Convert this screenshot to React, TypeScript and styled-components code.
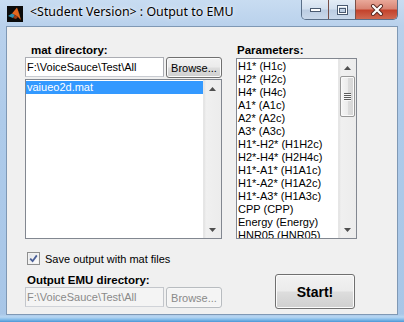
import React from 'react'
import styled, { createGlobalStyle } from 'styled-components'

const GlobalStyle = createGlobalStyle`
  html, body {
    margin: 0;
    padding: 0;
    background: #ffffff;
  }
  body {
    font-family: "Liberation Sans", Arial, sans-serif;
  }
`

const matFiles = ['vaiueo2d.mat']

const parameters = [
  'H1* (H1c)',
  'H2* (H2c)',
  'H4* (H4c)',
  'A1* (A1c)',
  'A2* (A2c)',
  'A3* (A3c)',
  'H1*-H2* (H1H2c)',
  'H2*-H4* (H2H4c)',
  'H1*-A1* (H1A1c)',
  'H1*-A2* (H1A2c)',
  'H1*-A3* (H1A3c)',
  'CPP (CPP)',
  'Energy (Energy)',
  'HNR05 (HNR05)',
]

const Window = styled.div`
  width: 404px;
  height: 322px;
  box-sizing: border-box;
  padding: 0 6px 7px 6px;
  display: flex;
  flex-direction: column;
  background:
    linear-gradient(0deg, #4b97d6 0px, #8fc2ec 3px, #b7d6f2 5px, rgba(180, 208, 236, 0) 8px),
    linear-gradient(180deg, #c8dcf1 0px, #b9d1ec 26px, #aecbea 120px, #a8c6e7 100%);
`

const TitleBar = styled.div`
  height: 26px;
  display: flex;
  align-items: flex-start;
`

const AppIcon = styled.svg`
  width: 16px;
  height: 16px;
  margin: 6px 0 0 1px;
  flex: none;
`

const Title = styled.div`
  margin: 4px 0 0 7px;
  font-family: "Noto Sans", "Open Sans", sans-serif;
  font-size: 12.4px;
  line-height: 16px;
  color: #000;
  text-shadow: 0 0 6px rgba(255, 255, 255, 0.9), 0 0 2px rgba(255, 255, 255, 0.9);
  white-space: nowrap;
`

const Caption = styled.div`
  margin-left: auto;
  display: flex;
  height: 19px;
  border: 1px solid #5a6f88;
  border-top: none;
  border-radius: 0 0 5px 5px;
  overflow: hidden;
`

const CaptionButton = styled.div<{ $close?: boolean }>`
  width: ${(p) => (p.$close ? '41px' : '26px')};
  display: flex;
  align-items: center;
  justify-content: center;
  & + & {
    border-left: 1px solid ${(p) => (p.$close ? '#7a5048' : '#8aa0ba')};
  }
  background: ${(p) =>
    p.$close
      ? 'linear-gradient(180deg, #e9a99a 0%, #d98574 45%, #c4432c 55%, #cf6a52 100%)'
      : 'linear-gradient(180deg, #e3ecf6 0%, #d3e0ef 45%, #bccde2 55%, #c9d8ea 100%)'};
`

const Client = styled.div`
  flex: 1;
  border: 1px solid #7f98b4;
  background: #f0f0f0;
  padding: 17px 0 0 18px;
  display: flex;
  gap: 14px;
`

const Column = styled.div<{ $width: number }>`
  width: ${(p) => p.$width}px;
  display: flex;
  flex-direction: column;
`

const Label = styled.div<{ $indent: number; $top?: number }>`
  height: 13px;
  line-height: 13px;
  margin-left: ${(p) => p.$indent}px;
  margin-top: ${(p) => p.$top || 0}px;
  font-size: 11.5px;
  font-weight: bold;
  color: #000;
  white-space: nowrap;
`

const FieldRow = styled.div`
  display: flex;
  gap: 2px;
  height: 21px;
`

const TextField = styled.div<{ $disabled?: boolean }>`
  width: 139px;
  height: 20px;
  box-sizing: border-box;
  border: 1px solid ${(p) => (p.$disabled ? '#c3c6cb' : '#abadb3')};
  border-bottom-color: ${(p) => (p.$disabled ? '#d0d3d8' : '#c9ccd2')};
  background: ${(p) => (p.$disabled ? '#f4f4f4' : '#ffffff')};
  color: ${(p) => (p.$disabled ? '#8a8a8a' : '#000')};
  font-size: 11px;
  line-height: 18px;
  padding-left: 1px;
  white-space: nowrap;
  overflow: hidden;
`

const Button = styled.div<{ $width: number; $height: number; $big?: boolean; $disabled?: boolean }>`
  width: ${(p) => p.$width}px;
  height: ${(p) => p.$height}px;
  box-sizing: border-box;
  border: 1px solid ${(p) => (p.$disabled ? '#b8bcc0' : '#707070')};
  border-radius: 3px;
  background: ${(p) =>
    p.$disabled
      ? '#f4f4f4'
      : 'linear-gradient(180deg, #f2f2f2 0%, #ebebeb 48%, #dddddd 52%, #cfcfcf 100%)'};
  box-shadow: inset 0 0 0 1px ${(p) => (p.$disabled ? '#f7f7f7' : '#fbfbfb')};
  color: ${(p) => (p.$disabled ? '#8a8a8a' : '#000')};
  font-size: ${(p) => (p.$big ? '14px' : '11px')};
  font-weight: ${(p) => (p.$big ? 'bold' : 'normal')};
  display: flex;
  align-items: center;
  justify-content: center;
  white-space: nowrap;
`

const ListBox = styled.div<{ $height: number; $top: number }>`
  height: ${(p) => p.$height}px;
  margin-top: ${(p) => p.$top}px;
  box-sizing: border-box;
  border: 1px solid #828790;
  background: #ffffff;
  display: flex;
  overflow: hidden;
`

const ListItems = styled.div`
  flex: 1;
  min-width: 0;
  display: flex;
  flex-direction: column;
  padding-top: 1px;
`

const ListItem = styled.div<{ $selected?: boolean }>`
  height: 13px;
  line-height: 13px;
  font-size: 11px;
  padding-left: 1px;
  white-space: nowrap;
  flex: none;
  background: ${(p) => (p.$selected ? '#3399ff' : 'transparent')};
  color: ${(p) => (p.$selected ? '#ffffff' : '#000')};
`

const ScrollTrack = styled.div`
  width: 17px;
  flex: none;
  display: flex;
  flex-direction: column;
  background: linear-gradient(90deg, #e2e2e2 0px, #f0f0f0 2px, #ececec 100%);
  border-left: 1px solid #e6e6e6;
`

const ScrollArrow = styled.div`
  height: 17px;
  display: flex;
  align-items: center;
  justify-content: center;
  flex: none;
`

const ScrollSpace = styled.div`
  flex: 1;
`

const Thumb = styled.div`
  height: 41px;
  margin: 0 1px 0 1px;
  box-sizing: border-box;
  border: 1px solid #979797;
  border-radius: 2px;
  background: linear-gradient(90deg, #f6f6f6 0%, #ececec 50%, #dcdcdc 52%, #d6d6d6 100%);
  box-shadow: inset 0 0 0 1px #fafafa;
  display: flex;
  flex-direction: column;
  align-items: center;
  justify-content: center;
  gap: 1px;
`

const Grip = styled.div`
  width: 7px;
  height: 1px;
  background: #5c5c5c;
  box-shadow: 0 1px 0 #f8f8f8;
`

const CheckRow = styled.div`
  margin: 13px 0 0 2px;
  height: 13px;
  display: flex;
  align-items: center;
  gap: 5px;
  font-size: 11px;
  color: #000;
`

const CheckBox = styled.div`
  width: 13px;
  height: 13px;
  box-sizing: border-box;
  border: 1px solid #8e8f8f;
  background: linear-gradient(135deg, #e1e4e8 0%, #f4f4f4 60%, #ffffff 100%);
  box-shadow: inset 0 0 0 1px #f2f2f2;
  display: flex;
  align-items: center;
  justify-content: center;
`

const StartWrap = styled.div`
  margin-top: 35px;
  align-self: flex-end;
  margin-right: 2px;
`

const Arrow = ({ down }: { down?: boolean }) => (
  <svg width="7" height="4" viewBox="0 0 7 4">
    <polygon
      points={down ? '0,0 7,0 3.5,4' : '3.5,0 7,4 0,4'}
      fill="#4f4f4f"
    />
  </svg>
)

const Scrollbar = ({ thumb }: { thumb?: boolean }) => (
  <ScrollTrack>
    <ScrollArrow>
      <Arrow />
    </ScrollArrow>
    {thumb && (
      <Thumb>
        <Grip />
        <Grip />
        <Grip />
        <Grip />
      </Thumb>
    )}
    <ScrollSpace />
    <ScrollArrow>
      <Arrow down />
    </ScrollArrow>
  </ScrollTrack>
)

const MatlabIcon = () => (
  <AppIcon viewBox="0 0 16 16">
    <rect width="16" height="16" fill="#0b0b0b" />
    <polygon points="1,10 5,7.5 8,9 6,12" fill="#2e8fb0" />
    <polygon points="5,7.5 10,1.5 14,14 11,11 8,9" fill="#e2661f" />
    <polygon points="10,1.5 12,7 14,14" fill="#f4a23a" />
    <polygon points="6,12 8,9 11,11 9,13" fill="#9a3b14" />
  </AppIcon>
)

const App = () => (
  <>
    <GlobalStyle />
    <Window>
      <TitleBar>
        <MatlabIcon />
        <Title>&lt;Student Version&gt; : Output to EMU</Title>
        <Caption>
          <CaptionButton>
            <svg width="13" height="6" viewBox="0 0 13 6">
              <rect x="1.5" y="1.5" width="10" height="3" fill="#ffffff" stroke="#4a5a70" />
            </svg>
          </CaptionButton>
          <CaptionButton>
            <svg width="11" height="10" viewBox="0 0 11 10">
              <rect x="0.5" y="0.5" width="10" height="9" fill="none" stroke="#4a5a70" />
              <rect x="1.5" y="1.5" width="8" height="7" fill="none" stroke="#ffffff" />
              <rect x="2.5" y="3.5" width="6" height="4" fill="none" stroke="#4a5a70" />
            </svg>
          </CaptionButton>
          <CaptionButton $close>
            <svg width="14" height="12" viewBox="0 0 14 12">
              <path d="M3 2 L11 10 M11 2 L3 10" stroke="#5a2a22" strokeWidth="4" strokeLinecap="round" />
              <path d="M3 2 L11 10 M11 2 L3 10" stroke="#ffffff" strokeWidth="2.2" strokeLinecap="round" />
            </svg>
          </CaptionButton>
        </Caption>
      </TitleBar>
      <Client>
        <Column $width={197}>
          <Label $indent={6}>mat directory:</Label>
          <FieldRow>
            <TextField>F:\VoiceSauce\Test\All</TextField>
            <Button $width={56} $height={21}>
              Browse...
            </Button>
          </FieldRow>
          <ListBox $height={160} $top={1}>
            <ListItems>
              {matFiles.map((f, i) => (
                <ListItem key={f} $selected={i === 0}>
                  {f}
                </ListItem>
              ))}
            </ListItems>
            <Scrollbar />
          </ListBox>
          <CheckRow>
            <CheckBox>
              <svg width="9" height="9" viewBox="0 0 9 9">
                <path d="M1.2 4.6 L3.6 7.2 L7.8 1.4" fill="none" stroke="#4a5f97" strokeWidth="1.8" />
              </svg>
            </CheckBox>
            Save output with mat files
          </CheckRow>
          <Label $indent={2} $top={9}>
            Output EMU directory:
          </Label>
          <FieldRow>
            <TextField $disabled>F:\VoiceSauce\Test\All</TextField>
            <Button $width={56} $height={21} $disabled>
              Browse...
            </Button>
          </FieldRow>
        </Column>
        <Column $width={121}>
          <Label $indent={1}>Parameters:</Label>
          <ListBox $height={181} $top={1}>
            <ListItems>
              {parameters.map((p) => (
                <ListItem key={p}>{p}</ListItem>
              ))}
            </ListItems>
            <Scrollbar thumb />
          </ListBox>
          <StartWrap>
            <Button $width={80} $height={35} $big>
              Start!
            </Button>
          </StartWrap>
        </Column>
      </Client>
    </Window>
  </>
)

export default App
